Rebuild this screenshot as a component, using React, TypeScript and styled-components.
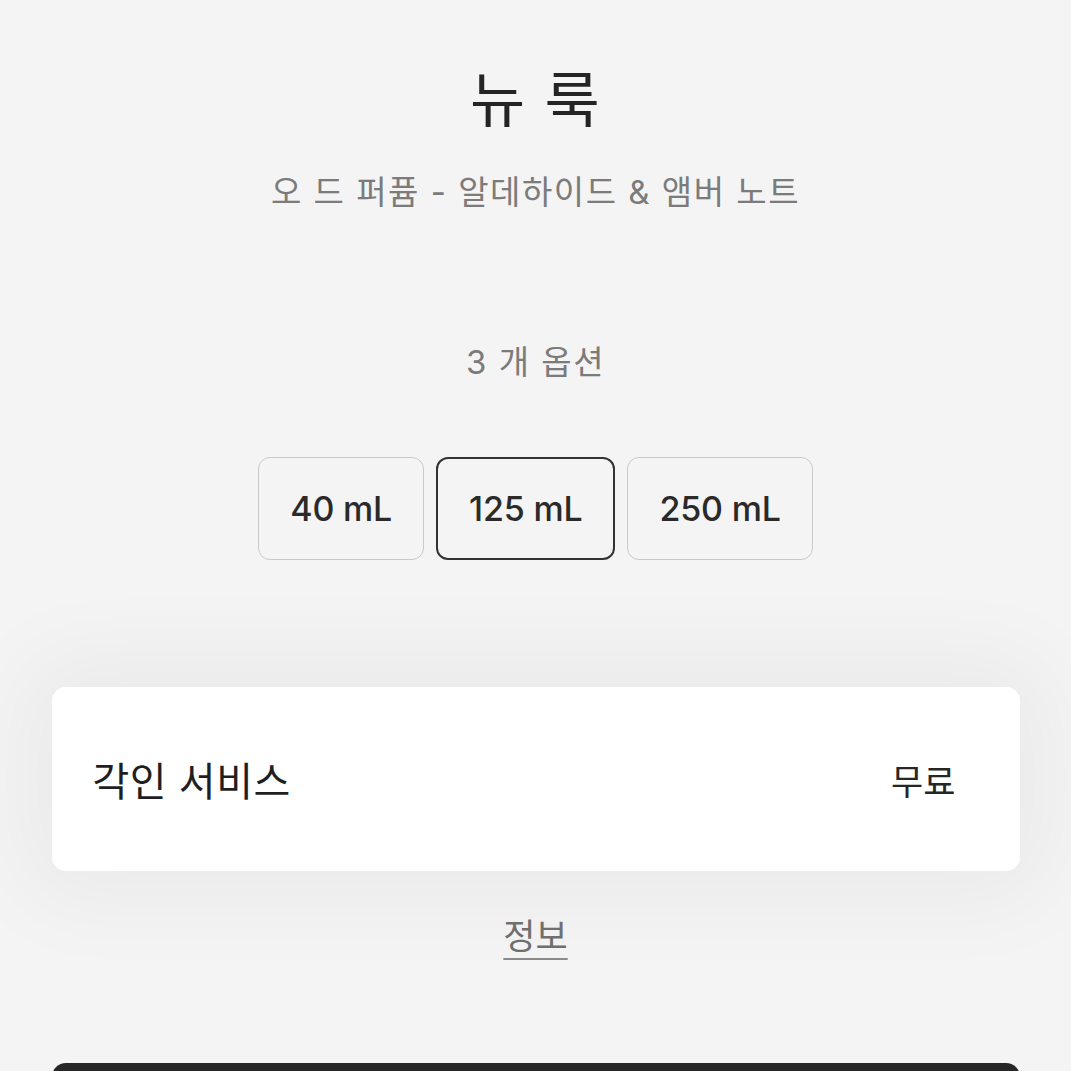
import React, { useState } from "react";
import styled, { createGlobalStyle } from "styled-components";

const GlobalStyle = createGlobalStyle`
  html, body {
    margin: 0;
    padding: 0;
    background: #f4f4f4;
    overflow: hidden;
  }
  body {
    font-family: "Inter", "Noto Sans CJK KR", sans-serif;
    color: #262626;
  }
`;

const Page = styled.div`
  width: 1071px;
  height: 1071px;
  display: flex;
  flex-direction: column;
  align-items: center;
  overflow: hidden;

  & > * {
    flex-shrink: 0;
  }
`;

const Title = styled.h1`
  margin: 62px 0 0;
  font-size: 60px;
  font-weight: 400;
  line-height: 76px;
  color: #242424;
  letter-spacing: 0.02em;
`;

const Subtitle = styled.p`
  margin: 32px 0 0;
  font-size: 33px;
  line-height: 44px;
  letter-spacing: 1.5px;
  color: #7b7b7b;
  font-weight: 400;
`;

const OptionCount = styled.p`
  margin: 126px 0 0;
  font-size: 33px;
  line-height: 44px;
  letter-spacing: 1.5px;
  color: #7b7b7b;
`;

const Options = styled.div`
  display: flex;
  gap: 12px;
  margin-top: 73px;
`;

const OptionButton = styled.button<{ $selected?: boolean }>`
  height: 103px;
  padding: 0 31px;
  border-radius: 12px;
  border: ${(p) => (p.$selected ? "2px solid #333333" : "1.5px solid #c8c8c8")};
  background: #f4f4f4;
  font-family: "Inter", sans-serif;
  font-size: 34px;
  font-weight: 500;
  color: #2a2a2a;
  letter-spacing: -0.2px;
  cursor: pointer;
`;

const Card = styled.div`
  margin-top: 127px;
  width: 968px;
  height: 184px;
  box-sizing: border-box;
  padding: 0 64px 0 41px;
  background: #ffffff;
  border-radius: 14px;
  box-shadow: 0 0 90px 30px rgba(0, 0, 0, 0.045);
  display: flex;
  align-items: center;
  justify-content: space-between;
`;

const CardLabel = styled.span`
  font-size: 40px;
  font-weight: 400;
  letter-spacing: 0.5px;
  color: #1f1f1f;
`;

const CardValue = styled.span`
  font-size: 35px;
  color: #262626;
`;

const InfoLink = styled.a`
  margin-top: 43px;
  font-size: 35px;
  line-height: 44px;
  color: #6f6f6f;
  text-decoration: underline;
  text-underline-offset: 9px;
  text-decoration-thickness: 2px;
  text-decoration-color: #8a8a8a;
`;

const CheckoutBar = styled.div`
  margin-top: 105px;
  width: 968px;
  height: 80px;
  background: #262626;
  border-radius: 14px;
`;

const sizes = ["40 mL", "125 mL", "250 mL"];

export default function App() {
  const [selected, setSelected] = useState(1);
  return (
    <Page>
      <GlobalStyle />
      <Title>뉴 룩</Title>
      <Subtitle>오 드 퍼퓸 - 알데하이드 &amp; 앰버 노트</Subtitle>
      <OptionCount>3 개 옵션</OptionCount>
      <Options>
        {sizes.map((s, i) => (
          <OptionButton key={s} $selected={i === selected} onClick={() => setSelected(i)}>
            {s}
          </OptionButton>
        ))}
      </Options>
      <Card>
        <CardLabel>각인 서비스</CardLabel>
        <CardValue>무료</CardValue>
      </Card>
      <InfoLink>정보</InfoLink>
      <CheckoutBar />
    </Page>
  );
}
